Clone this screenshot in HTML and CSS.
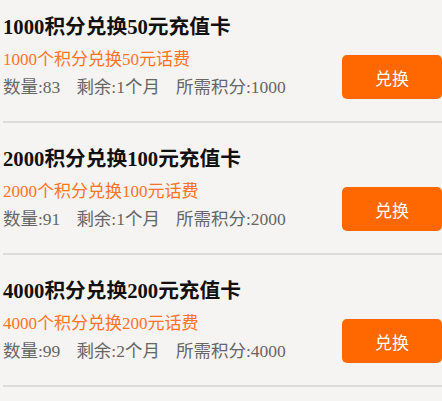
FILE: index.html
```html
<!DOCTYPE html>
<html>
<head>
    <meta charset="utf-8">
    <title>积分兑换</title>
    <link rel="stylesheet" href="styles.css">
</head>
<body>
    <div class="list">
        <div class="item">
            <div class="info">
                <div class="title">1000积分兑换50元充值卡</div>
                <div class="desc">1000个积分兑换50元话费</div>
                <div class="meta"><span>数量:83</span><span>剩余:1个月</span><span>所需积分:1000</span></div>
            </div>
            <button class="btn">兑换</button>
        </div>
        <div class="item">
            <div class="info">
                <div class="title">2000积分兑换100元充值卡</div>
                <div class="desc">2000个积分兑换100元话费</div>
                <div class="meta"><span>数量:91</span><span>剩余:1个月</span><span>所需积分:2000</span></div>
            </div>
            <button class="btn">兑换</button>
        </div>
        <div class="item">
            <div class="info">
                <div class="title">4000积分兑换200元充值卡</div>
                <div class="desc">4000个积分兑换200元话费</div>
                <div class="meta"><span>数量:99</span><span>剩余:2个月</span><span>所需积分:4000</span></div>
            </div>
            <button class="btn">兑换</button>
        </div>
    </div>
</body>
</html>
```

FILE: styles.css
```css
body { margin: 0; background: #f5f4f2; font-family: "Liberation Serif", "Noto Sans CJK SC", serif; overflow: hidden; }
.list { margin-top: -9px; }
.item { display: flex; align-items: flex-end; justify-content: space-between; margin-left: 3px; padding: 19px 0 18px 0; border-bottom: 2px solid #dddcda; }
.title { font-size: 20.7px; font-weight: bold; line-height: 31px; color: #111; padding-top: 2px; margin-bottom: -2px; }
.desc { font-size: 17px; line-height: 31px; color: #ff7326; padding-top: 3px; margin-bottom: -3px; }
.meta { font-size: 17.5px; line-height: 31px; color: #666; }
.meta span { margin-right: 16px; }
.btn { width: 100px; height: 44px; margin-bottom: 4px; border: none; border-radius: 5px; background: #ff6800; color: #fff; font-family: "Noto Sans CJK SC", sans-serif; font-size: 17px; }
```
